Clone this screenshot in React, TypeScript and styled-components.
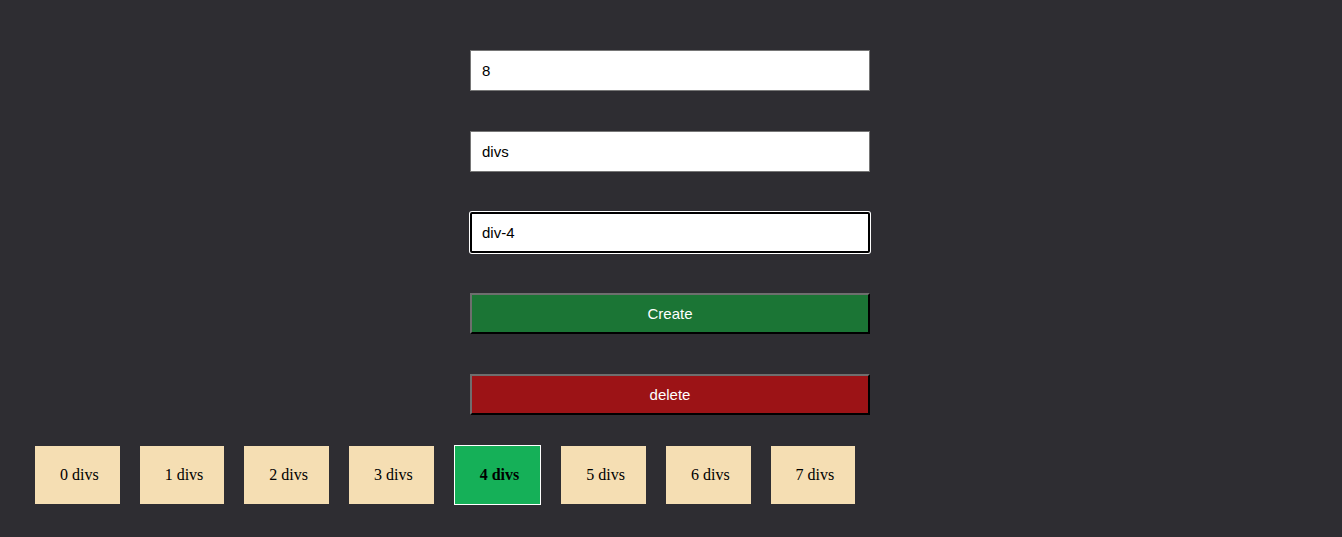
import React, { useEffect, useRef } from "react";
import styled, { createGlobalStyle, css } from "styled-components";

const Global = createGlobalStyle`
  html, body {
    margin: 0;
    padding: 0;
    background: #2e2d32;
    min-height: 100%;
  }
  body {
    font-family: "Liberation Serif", "Times New Roman", serif;
  }
`;

const Page = styled.div`
  display: flex;
  flex-direction: column;
  padding-top: 50px;
`;

const Form = styled.div`
  display: flex;
  flex-direction: column;
  gap: 40px;
  width: 400px;
  margin: 0 auto;
  position: relative;
  left: -1px;
`;

const Field = styled.input`
  box-sizing: border-box;
  width: 400px;
  height: 41px;
  margin: 0;
  padding: 0 11px;
  border: 1px solid #767676;
  border-radius: 0;
  background: #ffffff;
  color: #000;
  font-family: "Liberation Sans", Arial, sans-serif;
  font-size: 15px;
  outline: none;
  &:focus {
    border: 2px solid #000;
    border-radius: 2px;
    padding: 0 10px;
    box-shadow: 0 0 0 1px #ffffff;
  }
`;

const ActionButton = styled.button<{ $tone: "create" | "delete" }>`
  box-sizing: border-box;
  width: 400px;
  height: 41px;
  margin: 0;
  padding: 0;
  border: 2px outset #767676;
  border-top-color: #6e6e6e;
  border-left-color: #6e6e6e;
  border-bottom-color: #2a2a2a;
  border-right-color: #2a2a2a;
  color: #ffffff;
  font-family: "Liberation Sans", Arial, sans-serif;
  font-size: 15px;
  cursor: pointer;
  background: ${(p) => (p.$tone === "create" ? "#1b7535" : "#9c1316")};
`;

const Row = styled.div`
  display: flex;
  align-items: flex-start;
  gap: 20px;
  padding: 31px 0 0 35px;
`;

const Box = styled.div<{ $active?: boolean }>`
  box-sizing: border-box;
  height: 58px;
  display: flex;
  align-items: center;
  padding: 0 21px 0 25px;
  font-size: 16px;
  color: #000;
  background: #f5deb3;
  white-space: nowrap;
  ${(p) =>
    p.$active &&
    css`
      height: 60px;
      margin-top: -1px;
      background: #15b058;
      border: 1px solid #ffffff;
      font-weight: bold;
    `}
`;

export default function App() {
  const ref = useRef<HTMLInputElement>(null);
  useEffect(() => {
    const el = ref.current;
    if (el) {
      el.focus();
      const n = el.value.length;
      el.setSelectionRange(n, n);
    }
  }, []);
  const items = Array.from({ length: 8 }, (_, i) => i);
  return (
    <>
      <Global />
      <Page>
        <Form>
          <Field defaultValue="8" />
          <Field defaultValue="divs" />
          <Field ref={ref} defaultValue="div-4" />
          <ActionButton $tone="create">Create</ActionButton>
          <ActionButton $tone="delete">delete</ActionButton>
        </Form>
        <Row>
          {items.map((i) => (
            <Box key={i} $active={i === 4}>
              {i} divs
            </Box>
          ))}
        </Row>
      </Page>
    </>
  );
}
